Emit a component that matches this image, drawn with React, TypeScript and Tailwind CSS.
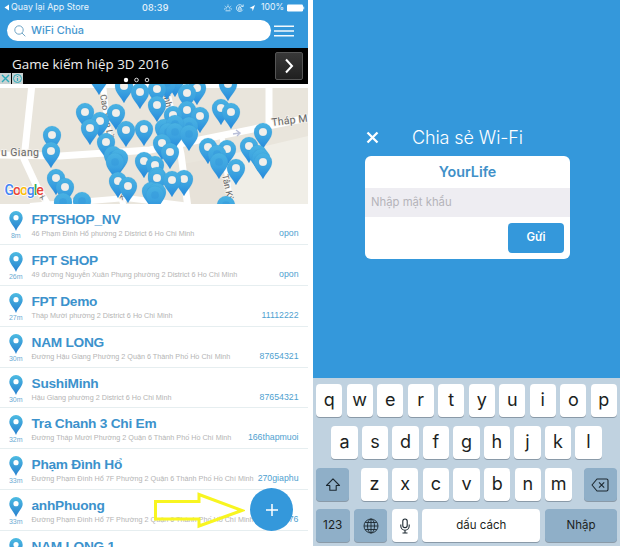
import type { ReactNode } from "react";

type Network = {
  name: string;
  address: string;
  password: string;
  distance: string;
};

const networks: Network[] = [
  { name: "FPTSHOP_NV", address: "46 Phạm Đình Hổ phường 2 District 6 Ho Chi Minh", password: "opon", distance: "8m" },
  { name: "FPT SHOP", address: "49 đường Nguyễn Xuân Phụng phường 2 District 6 Ho Chi Minh", password: "opon", distance: "26m" },
  { name: "FPT Demo", address: "Tháp Mười phường 2 District 6 Ho Chi Minh", password: "11112222", distance: "27m" },
  { name: "NAM LONG", address: "Đường Hậu Giang Phường 2 Quận 6 Thành Phố Hồ Chí Minh", password: "87654321", distance: "30m" },
  { name: "SushiMinh", address: "Hậu Giang phường 2 District 6 Ho Chi Minh", password: "87654321", distance: "30m" },
  { name: "Tra Chanh 3 Chi Em", address: "Đường Tháp Mười Phường 2 Quận 6 Thành Phố Hồ Chí Minh", password: "166thapmuoi", distance: "32m" },
  { name: "Phạm Đình Hổ", address: "Đường Phạm Đình Hổ 7F Phường 2 Quận 6 Thành Phố Hồ Chí Minh", password: "270giaphu", distance: "33m" },
  { name: "anhPhuong", address: "Đường Phạm Đình Hổ 7F Phường 2 Quận 6 Thành Phố Hồ Chí Minh", password: "123456776", distance: "33m" },
  { name: "NAM LONG 1", address: "", password: "", distance: "" },
];

// x, y of each pin's head; a third value of 1 marks a pin whose hole is covered by its neighbours
const mapPins: [number, number, number?][] = [
  [99, -6], [175, -4, 1], [167, -1, 1], [228, 0], [157, 5], [124, 2], [197, 4], [187, 9], [140, 8],
  [157, 21], [221, 24], [231, 28], [85, 28], [187, 26], [116, 29], [173, 31], [200, 32],
  [100, 37], [90, 44], [189, 42, 1], [164, 44, 1], [175, 40, 1], [144, 45], [126, 46], [168, 48, 1], [175, 48, 1], [189, 50, 1],
  [263, 48], [52, 51], [106, 58], [162, 59], [249, 62], [208, 63], [227, 65], [51, 67], [170, 68],
  [113, 71, 1], [217, 70, 1], [258, 70, 1], [119, 74, 1], [261, 74, 1], [115, 78, 1], [219, 78, 1], [263, 78], [144, 77],
  [155, 81], [236, 84], [157, 92, 1], [157, 94], [56, 94], [184, 95], [172, 96], [118, 97], [128, 102], [65, 103],
  [151, 107, 1], [157, 108, 1], [155, 111, 1], [82, 117, 1], [63, 118, 1], [226, 121, 1],
];

function MapView() {
  return (
    <svg className="block h-[120px] w-[308px] shrink-0" viewBox="0 0 308 120">
      <defs>
        <linearGradient id="pinFill" x1="0" y1="0" x2="0" y2="1">
          <stop offset="0" stopColor="#49b2e3" />
          <stop offset="0.55" stopColor="#3ba2e0" />
          <stop offset="1" stopColor="#2488dc" />
        </linearGradient>
      </defs>
      <rect width="308" height="120" fill="#e9e5dc" />
      <path d="M190 80 L308 52 V120 H190Z" fill="#f0eee7" />
      <path d="M183 80 L225 72 L232 120 H188Z" fill="#e7e2d9" />
      <g fill="none" stroke="#fff">
        <path d="M-5 1 H310" strokeWidth="6" />
        <path d="M32 0 L24 75 L38 105 L50 124" strokeWidth="7" />
        <path d="M-5 71 L60 72 L150 66 L308 34" strokeWidth="7" />
        <path d="M269 0 V39" strokeWidth="7" />
        <path d="M103 0 L110 66 L124 124" strokeWidth="6" />
        <path d="M165 0 L181 70 L188 124" strokeWidth="7" />
        <path d="M222 52 L231 122" strokeWidth="5" />
        <path d="M30 122 L126 114 L190 122" strokeWidth="6" />
      </g>
      <g fill="#666" fontFamily="Roboto, sans-serif" stroke="#f4f1ec" strokeWidth="1.5" paintOrder="stroke">
        <text x="1" y="72" fontSize="10.5" textLength="38">u Giang</text>
        <text x="272" y="42" fontSize="10.5" textLength="36" transform="rotate(-7 272 42)">Tháp M</text>
        <text x="100" y="11" fontSize="9" transform="rotate(80 100 11)">Cao Văn Lầu</text>
        <text x="162" y="4" fontSize="9" transform="rotate(78 162 4)">Minh Phụng</text>
        <text x="222" y="91" fontSize="9" transform="rotate(78 222 91)">Tân Kỳ</text>
        <text x="31" y="104" fontSize="7" transform="rotate(60 31 104)">K</text>
        <text x="39" y="114" fontSize="7" transform="rotate(30 39 114)">X</text>
        <text x="119" y="114" fontSize="7" transform="rotate(30 119 114)">K</text>
      </g>
      <path d="M233 50 L239 49 M236 46 L240 49 L237 52" fill="none" stroke="#b9bfd8" strokeWidth="1.4" />
      {mapPins.map(([x, y, covered], index) => (
        <g key={index} transform={`translate(${x} ${y})`}>
          <path
            d="M0 17 C-3.2 10.5 -9 6.5 -9 0 A9 9 0 0 1 9 0 C9 6.5 3.2 10.5 0 17Z"
            fill="url(#pinFill)"
            stroke="#2d8ccb"
            strokeOpacity="0.25"
            strokeWidth="0.5"
          />
          {covered ? (
            <circle r="3.8" fill="#3498db" fillOpacity="0.5" />
          ) : (
            <circle r="4.1" fill="#f1efeb" stroke="#2f8fce" strokeOpacity="0.4" strokeWidth="0.4" />
          )}
        </g>
      ))}
      <g fontSize="14" fontFamily="Roboto, sans-serif" fontWeight="500" stroke="#fff" strokeWidth="1.5" paintOrder="stroke">
        <text x="4.5" y="111" letterSpacing="-1.05">
          <tspan fill="#4285f4">G</tspan>
          <tspan fill="#ea4335">o</tspan>
          <tspan fill="#fbbc05">o</tspan>
          <tspan fill="#4285f4">g</tspan>
          <tspan fill="#34a853">l</tspan>
          <tspan fill="#ea4335">e</tspan>
        </text>
      </g>
    </svg>
  );
}

function ListPin() {
  return (
    <svg className="h-5 w-[14px]" viewBox="0 0 14 20">
      <defs>
        <linearGradient id="listPin" x1="0" y1="0" x2="0" y2="1">
          <stop offset="0" stopColor="#4dbbe2" />
          <stop offset="1" stopColor="#2880cf" />
        </linearGradient>
      </defs>
      <path d="M7 20 C5 14.5 .3 11.5 .3 6.7 A6.7 6.7 0 0 1 13.7 6.7 C13.7 11.5 9 14.5 7 20Z" fill="url(#listPin)" />
      <circle cx="7" cy="6.7" r="2.6" fill="#fff" />
    </svg>
  );
}

function StatusBar() {
  return (
    <div className="flex h-[15px] items-center pl-1 font-[Inter,sans-serif] text-[9px] leading-none text-white/90">
      <svg className="h-[7px] w-[6px]" viewBox="0 0 6 7"><path d="M5 .5 V6.5 L.5 3.5Z" fill="#fff" /></svg>
      <span className="ml-px w-[131px] whitespace-nowrap text-[8.9px]">Quay lại App Store</span>
      <span className="w-[82px] text-[9px] font-medium tracking-[0.2px]">08:39</span>
      <svg className="h-[10px] w-[34px]" viewBox="0 0 34 10" fill="none" stroke="#e3f2fb" strokeWidth="0.8">
        <path d="M2.2 6.5 A2 2 0 1 1 5.8 6.5 M1.5 7.8 H6.5 M4 1.5 V2.7 M.8 3 L1.7 3.8 M7.2 3 L6.3 3.8 M0 6 H1 M7 6 H8" />
        <path d="M18.7 3.3 A3.4 3.4 0 1 0 18.8 6.7 M17.2 3.5 H19.2 V1.5 M14.3 5 H17.2 V7 H14.3Z M15 5 V4 A.8.8 0 0 1 16.5 4 V5" />
        <path d="M25.5 5 L31 2 L28.7 8.2 L28.2 5.4Z" fill="#fff" stroke="none" />
      </svg>
      <span className="ml-[3px] w-[26px] text-[8.7px]">100%</span>
      <svg className="h-[8px] w-[18px]" viewBox="0 0 18 8"><rect x="0" y=".5" width="16" height="7" rx="1.2" fill="#fff" /><path d="M16.7 2.6 V5.4" stroke="#fff" strokeWidth="0.9" /></svg>
    </div>
  );
}

function NetworkRow({ item }: { item: Network }) {
  return (
    <div className="flex h-[40.9px] shrink-0 border-b border-[#e6eef0]">
      <div className="flex w-[31.5px] shrink-0 flex-col items-center pt-[7px]">
        <ListPin />
        <span className="mt-px text-[7px] leading-[8px] text-[#6cabd3]">{item.distance}</span>
      </div>
      <div className="min-w-0 flex-1">
        <div className="pt-2 text-[13.7px] font-bold leading-4 tracking-[-0.25px] whitespace-nowrap text-[#3c92cc]">{item.name}</div>
        <div className="flex items-baseline justify-between whitespace-nowrap pr-[9.5px] leading-[10px]">
          <span className="w-0 text-[7.22px] text-[#b4b4b4]">{item.address}</span>
          <span className="text-[8.75px] text-[#4f9fd0]">{item.password}</span>
        </div>
      </div>
    </div>
  );
}

function NearbyScreen() {
  return (
    <section className="relative flex h-[547px] w-[308px] shrink-0 flex-col overflow-hidden bg-white">
      <header className="h-12 shrink-0 bg-[#3498db]">
        <StatusBar />
        <div className="flex items-center gap-[3px] pt-[5px] pl-[7px]">
          <div className="flex h-[21px] w-[264px] items-center rounded-full bg-white pl-[7px]">
            <svg className="h-3 w-3" viewBox="0 0 12 12" fill="none" stroke="#72a6c6"><circle cx="5" cy="5" r="4.2" /><path d="M8 8 L11.3 11.3" /></svg>
            <span className="ml-[5px] font-[Inter,sans-serif] text-[10.9px] font-medium text-[#4697cf]">WiFi Chùa</span>
          </div>
          <svg className="h-3 w-5" viewBox="0 0 20 12"><path d="M0 1.2 H20 M0 6 H20 M0 10.8 H20" stroke="#f2f9fd" strokeWidth="1.6" /></svg>
        </div>
      </header>
      <div className="relative flex h-9 shrink-0 items-center justify-between bg-black pr-[5px] pl-3">
        <span className="-mt-[3px] font-['Open_Sans',sans-serif] text-[13.4px] whitespace-nowrap text-[#eee]">Game kiếm hiệp 3D 2016</span>
        <div className="flex h-7 w-7 items-center justify-center rounded-[2px] border border-[#555] bg-linear-to-b from-[#383838] to-[#202020]">
          <svg className="h-4 w-3" viewBox="0 0 12 16"><path d="M3 1.5 L9 8 L3 14.5" fill="none" stroke="#fff" strokeWidth="2" /></svg>
        </div>
        <svg className="absolute bottom-0 left-0 h-[11px] w-[23px]" viewBox="0 0 23 11">
          <rect width="11" height="11" fill="#c9d2d2" /><rect x="12" width="11" height="11" fill="#c9d2d2" />
          <path d="M2 2 L9 9 M9 2 L2 9" stroke="#2caab9" strokeWidth="1.4" />
          <circle cx="17.5" cy="5.5" r="4" fill="none" stroke="#2caab9" /><path d="M17.5 5 V8 M17.5 3 V4" stroke="#2caab9" strokeWidth="1.2" />
        </svg>
        <svg className="absolute bottom-[1px] left-[123px] h-[6px] w-[27px]" viewBox="0 0 27 6" fill="none" stroke="#ddd">
          <circle cx="3" cy="3" r="2.2" fill="#fff" stroke="none" /><circle cx="13.5" cy="3" r="1.8" /><circle cx="24" cy="3" r="1.8" />
        </svg>
      </div>
      <MapView />
      <div className="flex flex-col font-['Liberation_Sans',sans-serif]">
        {networks.map((item, index) => <NetworkRow key={index} item={item} />)}
      </div>
      <svg className="absolute top-[492px] left-[153px] h-[37px] w-[92px]" viewBox="0 0 92 37">
        <path d="M2.5 9.5 H46 V2.5 L89 18.5 L46 34 V27 H2.5Z" fill="none" stroke="#f8f520" strokeWidth="3" />
      </svg>
      <button className="absolute top-[488px] left-[250px] flex h-[43px] w-[43px] items-center justify-center rounded-full bg-[#3498db]">
        <svg className="h-3 w-3" viewBox="0 0 12 12"><path d="M6 0 V12 M0 6 H12" stroke="#fff" strokeWidth="1.5" /></svg>
      </button>
    </section>
  );
}

function Key({ children, className = "w-[26.3px] bg-white pb-[2px] text-[18px]" }: { children: ReactNode; className?: string }) {
  return (
    <div className={`flex h-[33px] shrink-0 items-center justify-center rounded-[4px] text-[#1c1f22] shadow-[0_1px_0_#8a9aa8] ${className}`}>
      {children}
    </div>
  );
}

function Keyboard() {
  return (
    <div className="flex h-[168px] flex-col gap-[8.8px] bg-[#c0d2e0] px-[3px] pt-[6px]">
      <div className="flex justify-between">{[..."qwertyuiop"].map((c) => <Key key={c}>{c}</Key>)}</div>
      <div className="flex justify-between px-[15.3px]">{[..."asdfghjkl"].map((c) => <Key key={c}>{c}</Key>)}</div>
      <div className="flex justify-between">
        <Key className="w-[33px] bg-[#8fafc8]">
          <svg className="mt-[2px] h-4 w-4" viewBox="0 0 16 16"><path d="M8 1.8 L14.5 8.5 H11.2 V13.2 H4.8 V8.5 H1.5Z" fill="none" stroke="#1c2830" strokeWidth="1.1" strokeLinejoin="round" /></svg>
        </Key>
        <div className="flex gap-[4.4px]">{[..."zxcvbnm"].map((c) => <Key key={c}>{c}</Key>)}</div>
        <Key className="w-[33px] bg-[#8fafc8]">
          <svg className="mt-px h-[14px] w-[18px]" viewBox="0 0 18 14" fill="none" stroke="#1c2830" strokeWidth="1.1"><path d="M6 1 H15.5 Q17 1 17 2.5 V11.5 Q17 13 15.5 13 H6 L1 7Z" strokeLinejoin="round" /><path d="M8 4.3 L13.2 9.7 M13.2 4.3 L8 9.7" /></svg>
        </Key>
      </div>
      <div className="flex justify-between">
        <Key className="w-[33.5px] bg-[#8fafc8] text-[11.8px]">123</Key>
        <Key className="w-[33px] bg-[#8fafc8]">
          <svg className="h-4 w-4" viewBox="0 0 16 16" fill="none" stroke="#1c2830" strokeWidth="0.9"><circle cx="8" cy="8" r="7" /><ellipse cx="8" cy="8" rx="3.5" ry="7" /><path d="M8 1 V15 M1 8 H15 M2.2 4.5 H13.8 M2.2 11.5 H13.8" /></svg>
        </Key>
        <Key className="w-[25.5px] bg-white">
          <svg className="h-4 w-3" viewBox="0 0 12 16" fill="none" stroke="#1c2830" strokeWidth="1.1"><rect x="3.8" y="1" width="4.4" height="8.6" rx="2.2" /><path d="M1.8 6.5 V8 A4.2 4.2 0 0 0 10.2 8 V6.5 M6 12.2 V15 M3.5 15 H8.5" /></svg>
        </Key>
        <Key className="w-[118px] bg-white pb-px text-[11.5px]">dấu cách</Key>
        <Key className="w-[72px] bg-[#8fafc8] pb-px text-[11.5px]">Nhập</Key>
      </div>
    </div>
  );
}

function ShareScreen() {
  return (
    <section className="flex h-[546px] w-[307px] shrink-0 flex-col justify-between bg-[#3498db] font-[Inter,sans-serif]">
      <div className="pt-[121px] pl-[52px]">
        <div className="mb-[3px] flex h-8 items-center">
          <svg className="ml-[1px] h-[13px] w-[13px]" viewBox="0 0 13 13"><path d="M1.5 1.5 L11.5 11.5 M11.5 1.5 L1.5 11.5" stroke="#fff" strokeWidth="2.3" /></svg>
          <h1 className="ml-[33px] mt-px text-[18px] font-light tracking-[-0.1px] whitespace-nowrap text-white">Chia sẻ Wi-Fi</h1>
        </div>
        <div className="flex h-[103px] w-[205px] flex-col overflow-hidden rounded-[6px] bg-white">
          <div className="flex h-8 items-center justify-center text-[14.3px] font-semibold text-[#4090c8]">YourLife</div>
          <div className="flex h-[29px] items-center bg-[#eeedf2] pl-[6px] text-[11.3px] text-[#b5b4ba]">Nhập mật khẩu</div>
          <div className="flex justify-end pt-[6px] pr-[6px]">
            <button className="flex h-[30px] w-14 items-center justify-center rounded-[4px] bg-[#3498db] text-[11.5px] font-semibold text-white">Gửi</button>
          </div>
        </div>
      </div>
      <Keyboard />
    </section>
  );
}

export default function App() {
  return (
    <main className="flex h-[547px] w-[620px] gap-[5px] overflow-hidden bg-white">
      <NearbyScreen />
      <ShareScreen />
    </main>
  );
}
